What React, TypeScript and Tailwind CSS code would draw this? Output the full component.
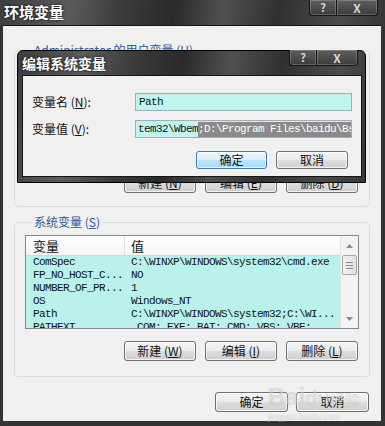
import React from 'react'

const cjk = "font-['Noto_Sans_CJK_SC',sans-serif]"
const mono = "font-['Liberation_Mono','Noto_Sans_CJK_SC',monospace] text-[11px] tracking-[-0.6px]"
const glass = 'bg-[linear-gradient(100deg,#3e3e3e_0%,#5c5c5c_18%,#3a3a3a_32%,#2a2a2a_45%,#505050_58%,#303030_72%,#4b4b4b_88%,#363636_100%)]'

const Btn = ({ children, w = 'w-[72px]', h = 'h-[20px]', primary = false }: { children: React.ReactNode; w?: string; h?: string; primary?: boolean }) => (
    <div
        className={`${w} ${h} flex items-center justify-center rounded-[3px] border text-[12px] text-[#111] shadow-[inset_0_0_0_1px_rgba(255,255,255,0.75)] ${
            primary
                ? 'border-[#3c7fb1] bg-[linear-gradient(#eaf6fd,#d9f0fc_50%,#bee6fd_50%,#a7d9f5)]'
                : 'border-[#707070] bg-[linear-gradient(#f4f4f4,#ebebeb_50%,#dddddd_50%,#cfcfcf)]'
        }`}
    >
        {children}
    </div>
)

const Caption = () => (
    <div className="flex h-[16px]">
        <div className="w-[28px] flex items-center justify-center rounded-bl-[4px] border border-t-0 border-[#161616] bg-[linear-gradient(#5e5e5e,#3c3c3c)] shadow-[inset_0_0_0_1px_rgba(255,255,255,0.2)] text-[11px] font-bold leading-none text-[#d8d8d8]">?</div>
        <div className="w-[41px] flex items-center justify-center rounded-br-[4px] border border-l-0 border-t-0 border-[#161616] bg-[linear-gradient(#5e5e5e,#3c3c3c)] shadow-[inset_0_0_0_1px_rgba(255,255,255,0.2)] text-[12px] font-bold leading-none text-[#d8d8d8]">X</div>
    </div>
)

const Arrow = ({ up }: { up?: boolean }) => (
    <svg width="7" height="4" viewBox="0 0 7 4">
        <path d={up ? 'M0 4 L3.5 0 L7 4 Z' : 'M0 0 L3.5 4 L7 0 Z'} fill="#8a8a8a" />
    </svg>
)

const rows = [
    ['ComSpec', 'C:\\WINXP\\WINDOWS\\system32\\cmd.exe'],
    ['FP_NO_HOST_C...', 'NO'],
    ['NUMBER_OF_PR...', '1'],
    ['OS', 'Windows_NT'],
    ['Path', 'C:\\WINXP\\WINDOWS\\system32;C:\\WI...'],
    ['PATHEXT', '.COM;.EXE;.BAT;.CMD;.VBS;.VBE;'],
]

export default function App() {
    return (
        <div className={`relative w-[385px] h-[426px] overflow-hidden flex flex-col bg-[#333] ${cjk}`}>
            {/* outer title */}
            <div className={`h-[25px] shrink-0 flex justify-between ${glass}`}>
                <span className="ml-[4px] mt-[3px] text-[15px] leading-[18px] font-bold text-white [text-shadow:0_0_3px_#000]">环境变量</span>
                <div className="mr-[7px]"><Caption /></div>
            </div>

            {/* outer client */}
            <div className="ml-[3px] mr-[4px] mb-[5px] flex-1 flex flex-col px-[11px] bg-[#f0f0f0] border-t border-[#151515]">
                <fieldset className="mt-[17px] rounded-[4px] border border-[#d5dfe5] px-[10px] pb-[13px]">
                    <legend className="ml-[6px] px-[3px] text-[12px] leading-[14px] text-[#2b5b9e]">Administrator 的用户变量 (<u>U</u>)</legend>
                    <div className="mt-[4px] h-[100px] border border-[#828790] bg-white" />
                    <div className="mt-[12px] flex justify-end gap-[9px] mr-[1px]">
                        <Btn>新建 (<u>N</u>)</Btn>
                        <Btn>编辑 (<u>E</u>)</Btn>
                        <Btn>删除 (<u>D</u>)</Btn>
                    </div>
                </fieldset>

                <fieldset className="mt-[8px] rounded-[4px] border border-[#d5dfe5] px-[10px] pb-[15px]">
                    <legend className="ml-[6px] px-[3px] text-[12px] leading-[14px] text-[#2b5b9e]">系统变量 (<u>S</u>)</legend>
                    <div className="mt-[6px] h-[94px] flex overflow-hidden border border-[#828790] bg-white">
                        <div className="flex-1 flex flex-col">
                            <div className="h-[20px] shrink-0 flex items-center text-[13px] text-[#111] bg-[linear-gradient(#ffffff,#f4f4f4)] border-b border-[#d5d5d5]">
                                <span className="w-[99px] h-full flex items-center pl-[7px] border-r border-[#e2e2e2]">变量</span>
                                <span className="pl-[6px]">值</span>
                            </div>
                            <div className="flex-1 bg-[#b9f2ea]">
                                {rows.map(([name, value]) => (
                                    <div key={name} className={`h-[13px] flex items-center whitespace-nowrap text-[#111] ${mono}`}>
                                        <span className="w-[99px] pl-[7px]">{name}</span>
                                        <span className="pl-[6px]">{value}</span>
                                    </div>
                                ))}
                            </div>
                        </div>
                        <div className="w-[18px] shrink-0 flex flex-col bg-[#f3f3f3] border-l border-[#e6e6e6]">
                            <div className="h-[19px] flex items-center justify-center"><Arrow up /></div>
                            <div className="h-[20px] mx-[1px] flex flex-col items-center justify-center gap-[2px] rounded-[2px] border border-[#a8a8a8] bg-[linear-gradient(90deg,#f2f2f2,#e0e0e0)]">
                                <div className="w-[7px] h-px bg-[#888]" />
                                <div className="w-[7px] h-px bg-[#888]" />
                                <div className="w-[7px] h-px bg-[#888]" />
                            </div>
                            <div className="flex-1" />
                            <div className="h-[19px] flex items-center justify-center"><Arrow /></div>
                        </div>
                    </div>
                    <div className="mt-[12px] flex justify-end gap-[9px] mr-[1px]">
                        <Btn>新建 (<u>W</u>)</Btn>
                        <Btn>编辑 (<u>I</u>)</Btn>
                        <Btn>删除 (<u>L</u>)</Btn>
                    </div>
                </fieldset>

                <div className="mt-[15px] flex justify-end gap-[8px] mr-[1px]">
                    <Btn w="w-[73px]">确定</Btn>
                    <Btn w="w-[73px]">取消</Btn>
                </div>
            </div>

            {/* edit dialog over the outer window */}
            <div className={`absolute left-[17px] top-[50px] w-[349px] h-[133px] flex flex-col rounded-t-[6px] border border-black ${glass}`}>
                <div className="h-[24px] shrink-0 flex justify-between">
                    <span className="ml-[4px] mt-[3px] text-[14px] leading-[18px] font-bold text-white [text-shadow:0_0_3px_#000]">编辑系统变量</span>
                    <div className="mr-[7px] -mt-px"><Caption /></div>
                </div>
                <div className="ml-[4px] mr-[3px] mb-[5px] flex-1 flex flex-col bg-[#f0f0f0] border border-[#151515] pl-[9px] pr-[9px] pt-[17px]">
                    <div className="flex items-center h-[18px]">
                        <span className="w-[103px] text-[12px] text-[#111]">变量名 (<u>N</u>):</span>
                        <div className={`w-[217px] h-full flex items-center pl-[3px] bg-[#c0f5ee] border border-[#a5acb5] text-[#111] ${mono}`}>Path</div>
                    </div>
                    <div className="flex items-center h-[18px] mt-[9px]">
                        <span className="w-[103px] text-[12px] text-[#111]">变量值 (<u>V</u>):</span>
                        <div className={`w-[217px] h-full flex items-center pl-[2px] overflow-hidden whitespace-nowrap bg-[#c0f5ee] border border-[#a5acb5] text-[#111] ${mono}`}>
                            <span>tem32\Wbem</span>
                            <span className="h-[15px] flex items-center bg-[#8a8a8a] text-white">;D:\Program Files\baidu\Bs</span>
                        </div>
                    </div>
                    <div className="mt-[13px] flex justify-end gap-[9px] mr-[4px]">
                        <Btn w="w-[71px]" h="h-[18px]" primary>确定</Btn>
                        <Btn w="w-[72px]" h="h-[18px]">取消</Btn>
                    </div>
                </div>
            </div>

            {/* watermark */}
            <div className="absolute left-[268px] top-[384px] flex flex-col items-start pointer-events-none text-white/45 [text-shadow:0_0_1px_rgba(0,0,0,0.2)]">
                <span className="font-['Liberation_Sans',sans-serif] text-[24px] leading-[26px] font-bold">Bai<span className="text-[20px]">du</span><span className={`${cjk} text-[15px] font-normal`}>经验</span></span>
                <span className="font-['Liberation_Sans',sans-serif] text-[9px] leading-[10px]">jingyan.baidu.com</span>
            </div>
        </div>
    )
}
